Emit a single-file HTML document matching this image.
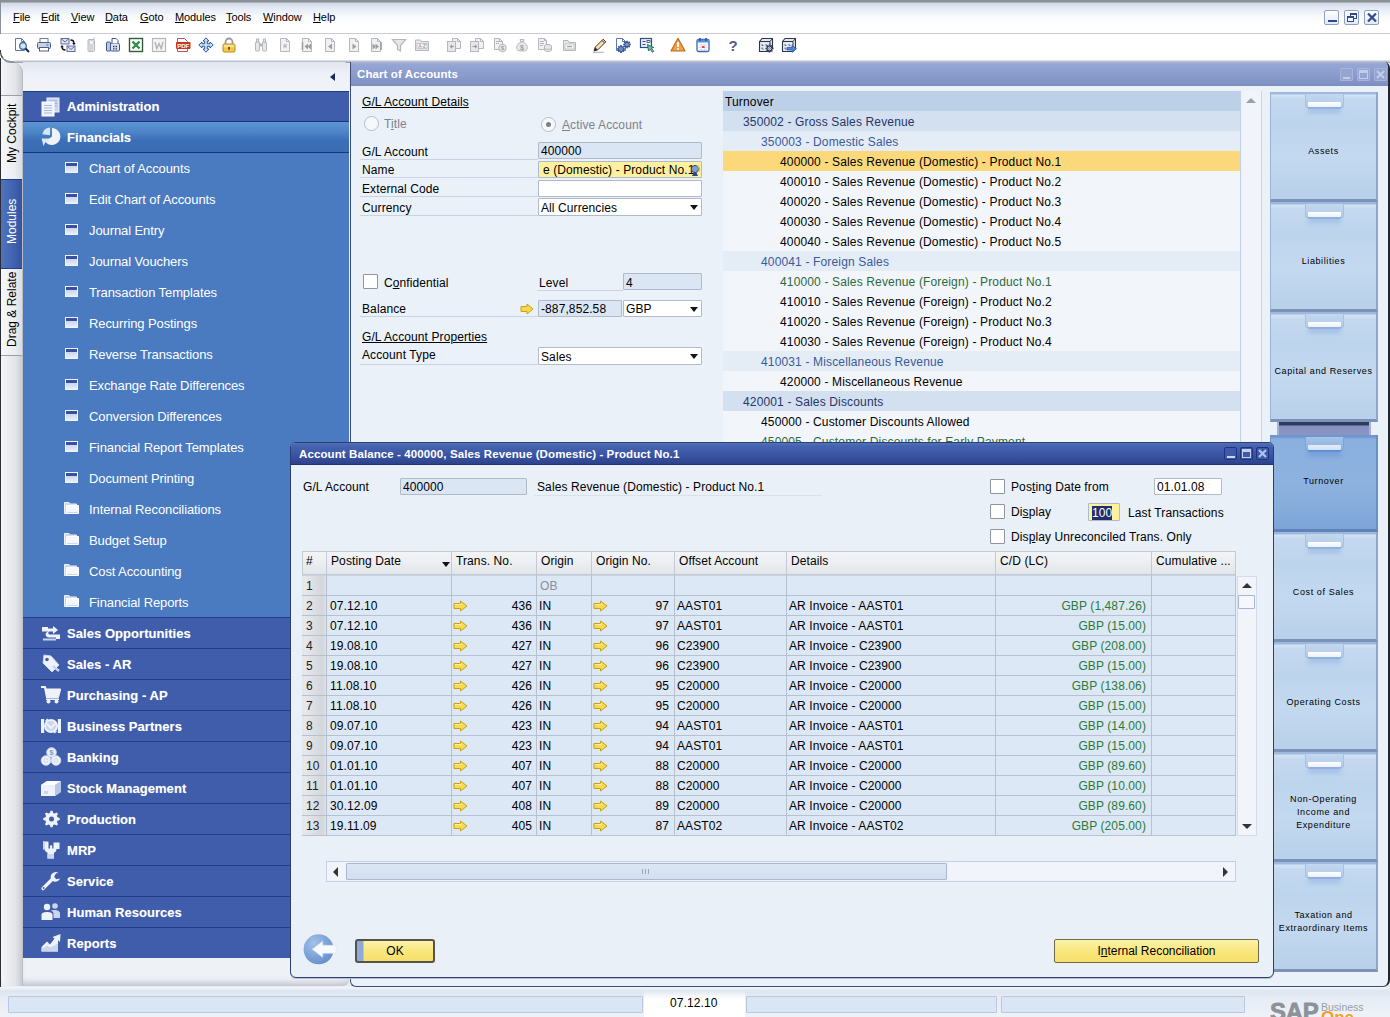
<!DOCTYPE html>
<html>
<head>
<meta charset="utf-8">
<title>SAP Business One</title>
<style>
*{box-sizing:border-box;margin:0;padding:0}
html,body{width:1390px;height:1017px;overflow:hidden;background:#e9eef5;font-family:"Liberation Sans",sans-serif;font-size:12px;color:#000}
.abs{position:absolute}
u{text-decoration:underline;text-underline-offset:1px}
/* ===== top chrome ===== */
#menubar{position:absolute;left:0;top:0;width:1390px;height:34px;background:linear-gradient(#8a9096 0,#8a9096 2px,#cfd8e6 3px,#e3eaf4 8px,#f7f9fc 16px,#ffffff 24px,#ffffff 100%);border-bottom:1px solid #c9cdd3}
#menubar span{position:absolute;top:11px;font-size:11px;color:#000;letter-spacing:-0.1px}
#toolbar{position:absolute;left:0;top:34px;width:1390px;height:28px;background:#fff}
.winbtn{position:absolute;top:10px;width:15px;height:15px;border:1px solid #8fa0c4;border-radius:2px;background:linear-gradient(#ffffff,#e4e9f3)}
/* ===== left ===== */
#tabstrip{position:absolute;left:1px;top:63px;width:22px;height:923px;border-radius:0 9px 0 8px;overflow:hidden;border-right:1px solid #b9bdc5;background:linear-gradient(90deg,#f4f5f7,#e2e4e8 70%,#c9ccd2)}
.vtab{position:absolute;left:0;width:23px;border-top:1px solid #9a9ea6;overflow:hidden}
.vtab span{position:absolute;left:4px;transform-origin:0 0;transform:rotate(-90deg);white-space:nowrap;font-size:12px}
#sidebar{position:absolute;left:23px;top:62px;width:326px;height:924px;background:#eef1f6;border-radius:0 6px 6px 0;overflow:hidden;box-shadow:inset 0 -7px 6px -4px rgba(60,70,90,.28)}
#sbhead{position:absolute;left:0;top:0;width:327px;height:29px;background:linear-gradient(#dfe5ef,#eef1f7 40%,#f1f3f8)}
.mod{position:absolute;left:0;width:327px;height:31px;background:#3f5daa;border-top:1px solid #1f3d8a;color:#fff;font-weight:bold;font-size:13px}
.mod b{position:absolute;left:44px;top:8px;font-weight:bold;letter-spacing:0.05px;text-shadow:0 0 1px rgba(255,255,255,.35)}
.mod svg{position:absolute}
#fin{height:32px;z-index:2;background:linear-gradient(#5e94d2 0,#4c84c8 35%,#3c6fb7 60%,#3a6cb3 100%);border-top:1px solid #17367f;border-bottom:1px solid #17367f}
#sub{position:absolute;left:0;top:90px;width:327px;height:465px;background:#4a7abf}
.si{position:absolute;left:0;width:327px;height:31px;color:#fff;font-size:13px}
.si span{position:absolute;left:66px;top:9px;letter-spacing:-0.1px}
.si i{position:absolute;left:42px;top:10px;width:13px;height:11px;border:1px solid #f0f3fa;background:linear-gradient(#3b4fa0 0,#3b4fa0 3px,#c9d4ee 3px,#e8edf8 100%)}
.si em{position:absolute;left:41px;top:8px;width:15px;height:13px}

/* ===== COA window ===== */
#coa{position:absolute;left:350px;top:62px;width:1040px;height:925px;background:#eaf1f9;border:1px solid #3d4c74;border-right:2px solid #23262e;border-top:none;border-radius:0 6px 7px 6px;overflow:hidden}
#coatitle{position:absolute;left:0;top:0;width:1038px;height:24px;background:linear-gradient(#aab7dc 0,#97a7d4 2px,#8d9ece 10px,#8294c6 20px,#7c8dbf 24px);color:#fff;font-weight:bold;font-size:11.5px}
#coatitle b{position:absolute;left:6px;top:6px;letter-spacing:0.1px}
.fb{position:absolute;top:6px;width:13px;height:13px;border:1px solid #a7b3d8;background:#95a5d2;border-radius:1px}
.lbl{position:absolute;font-size:12px;white-space:nowrap;letter-spacing:0.1px}
.ul{position:absolute;height:1px;background:#c9d3e1}
.fld{position:absolute;border:1px solid #b1bac9;background:#dbe6f4;font-size:12px;white-space:nowrap;overflow:hidden;padding:1px 0 0 2px;border-radius:1px;letter-spacing:0.1px}
.dd{position:absolute;border:1px solid #b1bac9;background:#fff;font-size:12px;white-space:nowrap;overflow:hidden;padding:1px 0 0 2px;border-radius:1px;letter-spacing:0.1px}
.dd:after{content:"";position:absolute;right:3px;top:6px;border-left:4.5px solid transparent;border-right:4.5px solid transparent;border-top:5px solid #111}
.cb{position:absolute;width:15px;height:15px;border:1px solid #8e959f;background:#fff;border-radius:1px}
.radio{position:absolute;width:15px;height:15px;border:1px solid #b9bec6;border-radius:50%;background:#f6f8fb}
#tree{position:absolute;left:372px;top:29px;width:518px;height:352px;overflow:hidden;background:#f2f6fb;border-right:1px solid #c3d2e6}
.tr{position:absolute;left:0;width:518px;height:20px;font-size:12px;white-space:nowrap;padding-top:4px;letter-spacing:0.15px}
.l0{background:#bcd0e8;padding-left:2px;color:#000}
.l1{background:#d3e0f0;padding-left:20px;color:#27356a}
.l2{background:#e4ecf6;padding-left:38px;color:#3b5a9a}
.l3{background:#f2f6fb;padding-left:57px;color:#000}
#tsb{position:absolute;left:891px;top:29px;width:20px;height:352px;background:#f1f5fb;border-right:1px solid #c9d6e8}
.drw{position:absolute;left:919px;width:108px;background:linear-gradient(#9db9dc 0,#9db9dc 2px,#d3e4f6 3px,#c4d9f0 7px,#bdd4ed 30%,#c3d9f0 60%,#b9d0ea 100%);border-left:1px solid #9ab3d6;border-right:2px solid #8ea7cc;border-bottom:3px solid #7b93b8;font-size:9px;text-align:center;letter-spacing:0.6px;color:#000}
.drw .h{position:absolute;left:34px;top:2px;width:39px;height:14px;background:linear-gradient(#c3d8f0,#b3cbe9);border:1px solid #a9c0e0;border-top:none;border-radius:0 0 3px 3px}
.drw .h:after{content:"";position:absolute;left:2px;top:8px;width:33px;height:5px;background:linear-gradient(#ffffff,#e9f1fb);border-radius:1px;box-shadow:0 2px 1px #8fb0dc,0 6px 5px #9dbde6}
.drw span{position:absolute;left:0;width:105px;line-height:13px}
.drw.sel{background:linear-gradient(#6f97cf 0,#6f97cf 2px,#8ab0df 4px,#8db2df 50%,#86acdb 80%,#7ba3d6 100%);border-left-color:#6d93c8;border-right-color:#6a8fc6;border-bottom-color:#5f83ba}
.drw.sel .h{background:linear-gradient(#a3c2e8,#8fb3e0);border-color:#7fa5d8}
.drw.sel .h:after{background:linear-gradient(#e4eefb,#cfe0f5);box-shadow:0 2px 1px #5f8fd0,0 6px 5px #6f9bd8}
/* ===== dialog ===== */
#dlg{position:absolute;left:290px;top:442px;width:984px;height:536px;background:#e9f0f8;border:1px solid #2c3f72;border-radius:5px 5px 6px 6px;overflow:hidden;box-shadow:0 1px 0 #b8c0d0}
#dlgt{position:absolute;left:0;top:0;width:984px;height:22px;background:linear-gradient(#5171ba 0,#4563b0 3px,#3b55a4 12px,#2b4088 22px);color:#fff;font-weight:bold;font-size:11.5px;border-bottom:1px solid #1f3470}
#dlgt b{position:absolute;left:8px;top:5px;letter-spacing:0.1px}
.db{position:absolute;top:4px;width:13px;height:13px;border:1px solid #1e3580;background:#3e5aaa;border-radius:2px}
#grid{position:absolute;left:11px;top:108px;width:934px;height:285px}
.gh{position:absolute;top:0;height:24px;background:linear-gradient(#f3f4f6,#eceef1 50%,#e2e5e9);border:1px solid #c3cad6;border-left:none;font-size:12px;padding:2px 0 0 4px;white-space:nowrap;overflow:hidden;letter-spacing:0.1px}
.gr{position:absolute;left:0;width:934px;height:20px;background:#dce8f5;border-bottom:1px solid #b7c1cf;font-size:12px;letter-spacing:0.1px}
.gr span{position:absolute;top:3px;white-space:nowrap}
.gr .n{left:0;top:0;width:24px;height:19px;background:linear-gradient(90deg,#dfe6ef 0,#e6e8eb 3px,#d3d6db 20px,#dde2e9 24px);padding:3px 0 0 4px;color:#222}
.vl{position:absolute;top:24px;width:1px;height:261px;background:#b7c1cf}
.ar{position:absolute;top:4px}
.btn{position:absolute;border:1px solid #6f6a4a;border-radius:2px;background:linear-gradient(#fdf3a8,#f9e67e 50%,#f6df6a);font-size:12px;text-align:center}
/* ===== status ===== */
#status{position:absolute;left:0;top:987px;width:1390px;height:30px;background:linear-gradient(#f4f6fa 0,#dde5f0 4px,#e6ecf5 10px,#eef2f8 100%)}
.sf{position:absolute;top:9px;height:17px;background:#dbe6f4;border:1px solid #b9c8de;border-radius:1px}
</style>
</head>
<body>
<!-- MENUBAR -->
<div id="menubar">
<span style="left:13px"><u>F</u>ile</span>
<span style="left:41px"><u>E</u>dit</span>
<span style="left:71px"><u>V</u>iew</span>
<span style="left:105px"><u>D</u>ata</span>
<span style="left:140px"><u>G</u>oto</span>
<span style="left:175px"><u>M</u>odules</span>
<span style="left:226px"><u>T</u>ools</span>
<span style="left:263px"><u>W</u>indow</span>
<span style="left:313px"><u>H</u>elp</span>
<div class="winbtn" style="left:1324px"><div class="abs" style="left:3px;top:9px;width:9px;height:2px;background:#2d4a8f"></div></div>
<div class="winbtn" style="left:1344px"><div class="abs" style="left:5px;top:2px;width:7px;height:6px;border:1px solid #2d4a8f;border-top-width:2px"></div><div class="abs" style="left:2px;top:5px;width:7px;height:6px;border:1px solid #2d4a8f;border-top-width:2px;background:#f3f5fa"></div></div>
<div class="winbtn" style="left:1364px"><svg class="abs" style="left:2px;top:2px" width="10" height="9" viewBox="0 0 10 9"><path d="M1 0.5 L9 8.5 M9 0.5 L1 8.5" stroke="#2d4a8f" stroke-width="2.2"/></svg></div>
</div>
<div class="abs" style="left:0;top:2px;width:1px;height:44px;background:#8a9098"></div>
<!-- TOOLBAR -->
<div id="toolbar"><svg class="abs" style="left:14px;top:3px" width="16" height="16" viewBox="0 0 16 16"><path d="M1.5 1.5H7.5L10.5 4.5V13.5H1.5Z" fill="#fff" stroke="#5b78b0" stroke-width="1"/><path d="M7.5 1.5V4.5H10.5" fill="none" stroke="#5b78b0" stroke-width="1"/><circle cx="9" cy="9" r="3.3" fill="#cfe3f6" stroke="#3d5f9a" stroke-width="1.2"/><path d="M11.5 11.5L15 15" stroke="#1c2740" stroke-width="2"/></svg><svg class="abs" style="left:36px;top:3px" width="16" height="16" viewBox="0 0 16 16"><rect x="4" y="1.5" width="8" height="5" fill="#fff" stroke="#6b7fa8"/><rect x="1.5" y="5.5" width="13" height="6" rx="1" fill="#c9d3e6" stroke="#4d5f86"/><rect x="3.5" y="10.5" width="9" height="3.5" fill="#fff" stroke="#4d5f86"/><rect x="10.5" y="7.5" width="2" height="1" fill="#4d5f86"/></svg><svg class="abs" style="left:60px;top:3px" width="16" height="16" viewBox="0 0 16 16"><rect x="1" y="1.5" width="8" height="5.5" fill="#e2e4f5" stroke="#5f6fa3"/><path d="M1 1.5L5 5L9 1.5" fill="none" stroke="#5f6fa3"/><rect x="7" y="9" width="8" height="5.5" fill="#e2e4f5" stroke="#5f6fa3"/><path d="M7 9L11 12.5L15 9" fill="none" stroke="#5f6fa3"/><path d="M10.5 3C13 3 14 4.5 14 6.5" fill="none" stroke="#111" stroke-width="1.4"/><path d="M12.2 6L14 8.3L15.6 6Z" fill="#111"/><path d="M5.5 13C3 13 2 11.5 2 9.8" fill="none" stroke="#111" stroke-width="1.4"/><path d="M0.4 10.2L2 8L3.8 10.2Z" fill="#111"/></svg><svg class="abs" style="left:83px;top:3px" width="16" height="16" viewBox="0 0 16 16"><rect x="5" y="2.5" width="6.5" height="12" rx="1" fill="#e6e7e9" stroke="#b4b7bb"/><rect x="6.2" y="4" width="4" height="3" fill="#fff" stroke="#b4b7bb" stroke-width=".6"/><path d="M6.5 9h1M8.5 9h1M6.5 11h1M8.5 11h1M6.5 13h1M8.5 13h1" stroke="#9a9da2"/><path d="M11 2.5V0.5" stroke="#b4b7bb"/></svg><svg class="abs" style="left:105px;top:3px" width="16" height="16" viewBox="0 0 16 16"><rect x="1.5" y="5" width="4" height="9" rx="1" fill="#b9c6e0" stroke="#3f558a"/><rect x="5.5" y="6.5" width="9" height="7.5" rx="1" fill="#dfe6f3" stroke="#3f558a"/><path d="M7 6.5V1.5H11L13 3.5V6.5" fill="#fff" stroke="#3f558a"/><path d="M8 9.5h1.5M10.5 9.5h1.5M8 11.8h1.5M10.5 11.8h1.5" stroke="#2c3f70" stroke-width="1.3"/></svg><svg class="abs" style="left:128px;top:3px" width="16" height="16" viewBox="0 0 16 16"><rect x="1.5" y="1.5" width="13" height="13" fill="#fff" stroke="#2f5d3a" stroke-width="1.4"/><path d="M4.5 4.5L11.5 11.5M11.5 4.5L4.5 11.5" stroke="#2e8a45" stroke-width="2.4"/></svg><svg class="abs" style="left:151px;top:3px" width="16" height="16" viewBox="0 0 16 16"><rect x="1.5" y="1.5" width="13" height="13" fill="#f4f4f5" stroke="#b4b7bb" stroke-width="1.2"/><path d="M4 5L5.8 11.5L8 6.5L10.2 11.5L12 5" fill="none" stroke="#b4b7bb" stroke-width="1.5"/></svg><svg class="abs" style="left:175px;top:3px" width="16" height="16" viewBox="0 0 16 16"><path d="M2.5 1.5H9.5L12.5 4.5V14.5H2.5Z" fill="#fff" stroke="#b55"/><rect x="1" y="5" width="14.5" height="7" rx="1" fill="#c8342c"/><text x="8.2" y="10.8" font-family="Liberation Sans" font-weight="bold" font-size="6.2" fill="#fff" text-anchor="middle" letter-spacing="-0.2">PDF</text></svg><svg class="abs" style="left:198px;top:3px" width="16" height="16" viewBox="0 0 16 16"><path d="M8 0.8L11 4H9.3V6.7H12V5L15.2 8L12 11V9.3H9.3V12H11L8 15.2L5 12H6.7V9.3H4V11L0.8 8L4 5V6.7H6.7V4H5Z" fill="#cfe1f5" stroke="#2a5a9a" stroke-width="1" stroke-linejoin="round"/></svg><svg class="abs" style="left:221px;top:3px" width="16" height="16" viewBox="0 0 16 16"><path d="M4.5 7.5V5A3.5 3.5 0 0 1 11.5 5V7.5" fill="none" stroke="#9a9aa0" stroke-width="1.8"/><rect x="2" y="7" width="12" height="8" rx="1.2" fill="#f3c94a" stroke="#b98a16"/><rect x="2.8" y="7.8" width="10.4" height="2.5" fill="#fbe38c"/><path d="M8 10v3M7 11h2" stroke="#3a3320" stroke-width="1.1"/></svg><svg class="abs" style="left:253px;top:3px" width="16" height="16" viewBox="0 0 16 16"><rect x="2.5" y="5" width="4" height="9" rx="1" fill="#e6e7e9" stroke="#b4b7bb"/><rect x="9.5" y="5" width="4" height="9" rx="1" fill="#e6e7e9" stroke="#b4b7bb"/><rect x="3.5" y="2" width="2.2" height="3" fill="#e6e7e9" stroke="#b4b7bb"/><rect x="10.3" y="2" width="2.2" height="3" fill="#e6e7e9" stroke="#b4b7bb"/><rect x="6.5" y="6.5" width="3" height="3" fill="#b4b7bb"/></svg><svg class="abs" style="left:277px;top:3px" width="16" height="16" viewBox="0 0 16 16"><path d="M3.5 1.5H9.5L12.5 4.5V14.5H3.5Z" fill="#f1f1f2" stroke="#b4b7bb" stroke-width="1"/><path d="M9.5 1.5V4.5H12.5" fill="none" stroke="#b4b7bb" stroke-width="1"/><path d="M6 9h4M8 7v4M6.5 7.5l3 3M9.5 7.5l-3 3" stroke="#b4b7bb" stroke-width=".9"/></svg><svg class="abs" style="left:299px;top:3px" width="16" height="16" viewBox="0 0 16 16"><path d="M3.5 1.5H9.5L12.5 4.5V14.5H3.5Z" fill="#f1f1f2" stroke="#b4b7bb" stroke-width="1"/><path d="M9.5 1.5V4.5H12.5" fill="none" stroke="#b4b7bb" stroke-width="1"/><path d="M3.5 5V13" stroke="#9a9da2" stroke-width="1.6"/><path d="M9 6.5L5.5 9.5L9 12.5Z" fill="#9a9da2"/><path d="M12 6.5L8.5 9.5L12 12.5Z" fill="#9a9da2"/></svg><svg class="abs" style="left:322px;top:3px" width="16" height="16" viewBox="0 0 16 16"><path d="M3.5 1.5H9.5L12.5 4.5V14.5H3.5Z" fill="#f1f1f2" stroke="#b4b7bb" stroke-width="1"/><path d="M9.5 1.5V4.5H12.5" fill="none" stroke="#b4b7bb" stroke-width="1"/><path d="M10 6.5L6 9.5L10 12.5Z" fill="#9a9da2"/></svg><svg class="abs" style="left:346px;top:3px" width="16" height="16" viewBox="0 0 16 16"><path d="M3.5 1.5H9.5L12.5 4.5V14.5H3.5Z" fill="#f1f1f2" stroke="#b4b7bb" stroke-width="1"/><path d="M9.5 1.5V4.5H12.5" fill="none" stroke="#b4b7bb" stroke-width="1"/><path d="M6.5 6.5L10.5 9.5L6.5 12.5Z" fill="#9a9da2"/></svg><svg class="abs" style="left:368px;top:3px" width="16" height="16" viewBox="0 0 16 16"><path d="M3.5 1.5H9.5L12.5 4.5V14.5H3.5Z" fill="#f1f1f2" stroke="#b4b7bb" stroke-width="1"/><path d="M9.5 1.5V4.5H12.5" fill="none" stroke="#b4b7bb" stroke-width="1"/><path d="M13 5V13" stroke="#9a9da2" stroke-width="1.6"/><path d="M4.5 6.5L8 9.5L4.5 12.5Z" fill="#9a9da2"/><path d="M7.5 6.5L11 9.5L7.5 12.5Z" fill="#9a9da2"/></svg><svg class="abs" style="left:391px;top:3px" width="16" height="16" viewBox="0 0 16 16"><path d="M1.5 2.5H14.5L9.5 8.5V14L6.5 12.5V8.5Z" fill="#e6e7e9" stroke="#b4b7bb" stroke-width="1.2"/></svg><svg class="abs" style="left:414px;top:3px" width="16" height="16" viewBox="0 0 16 16"><path d="M1.5 4.5V3H6.5L7.5 4.5H14.5V13.5H1.5Z" fill="#e6e7e9" stroke="#b4b7bb"/><rect x="3" y="6.5" width="10" height="5" fill="#f6f6f7" stroke="#b4b7bb" stroke-width=".7"/><text x="8" y="10.6" font-family="Liberation Sans" font-weight="bold" font-size="4.5" fill="#9a9da2" text-anchor="middle">A-Z</text></svg><svg class="abs" style="left:446px;top:3px" width="16" height="16" viewBox="0 0 16 16"><path d="M6.5 1.5H11.5L14.5 4.5V11.5H6.5Z" fill="#f1f1f2" stroke="#b4b7bb" stroke-width="1"/><path d="M11.5 1.5V4.5H14.5" fill="none" stroke="#b4b7bb" stroke-width="1"/><rect x="1.5" y="4.5" width="8" height="10" fill="#e6e7e9" stroke="#b4b7bb"/><path d="M8 9.5H4.5M6 8L4.5 9.5L6 11" fill="none" stroke="#9a9da2" stroke-width="1.1"/></svg><svg class="abs" style="left:469px;top:3px" width="16" height="16" viewBox="0 0 16 16"><path d="M6.5 1.5H11.5L14.5 4.5V11.5H6.5Z" fill="#f1f1f2" stroke="#b4b7bb" stroke-width="1"/><path d="M11.5 1.5V4.5H14.5" fill="none" stroke="#b4b7bb" stroke-width="1"/><rect x="1.5" y="4.5" width="8" height="10" fill="#e6e7e9" stroke="#b4b7bb"/><path d="M3.5 9.5H7.5M6 8L7.5 9.5L6 11" fill="none" stroke="#9a9da2" stroke-width="1.1"/></svg><svg class="abs" style="left:492px;top:3px" width="16" height="16" viewBox="0 0 16 16"><path d="M2.5 1.5H7.5L10.5 4.5V12.5H2.5Z" fill="#f1f1f2" stroke="#b4b7bb" stroke-width="1"/><path d="M7.5 1.5V4.5H10.5" fill="none" stroke="#b4b7bb" stroke-width="1"/><path d="M4 4.5h4M4 6.5h3" stroke="#b4b7bb"/><circle cx="10.5" cy="11" r="3.8" fill="#e6e7e9" stroke="#b4b7bb"/><text x="10.5" y="13.2" font-family="Liberation Sans" font-weight="bold" font-size="6" fill="#9a9da2" text-anchor="middle">$</text></svg><svg class="abs" style="left:514px;top:3px" width="16" height="16" viewBox="0 0 16 16"><path d="M6 2.5H10L9.3 5H6.7Z" fill="#e6e7e9" stroke="#b4b7bb"/><path d="M6.7 5C3 7 2 10 3 12.5C4 14.5 12 14.5 13 12.5C14 10 13 7 9.3 5Z" fill="#e6e7e9" stroke="#b4b7bb"/><text x="8" y="12.6" font-family="Liberation Sans" font-weight="bold" font-size="7" fill="#9a9da2" text-anchor="middle">$</text></svg><svg class="abs" style="left:537px;top:3px" width="16" height="16" viewBox="0 0 16 16"><path d="M1.5 1.5H7.5L9.5 3.5V12.5H1.5Z" fill="#f1f1f2" stroke="#b4b7bb" stroke-width="1"/><path d="M7.5 1.5V3.5H9.5" fill="none" stroke="#b4b7bb" stroke-width="1"/><path d="M3 4.5h4M3 6.5h4M3 8.5h3" stroke="#b4b7bb"/><ellipse cx="11" cy="9" rx="3.5" ry="1.5" fill="#e6e7e9" stroke="#b4b7bb"/><path d="M7.5 9V13C7.5 15 14.5 15 14.5 13V9" fill="#e6e7e9" stroke="#b4b7bb"/><path d="M7.5 11C7.5 12.8 14.5 12.8 14.5 11" fill="none" stroke="#b4b7bb"/></svg><svg class="abs" style="left:561px;top:3px" width="16" height="16" viewBox="0 0 16 16"><path d="M2.5 5.5V3.5H7L8 5.5H14.5V13.5H2.5Z" fill="#e6e7e9" stroke="#b4b7bb"/><rect x="4" y="7" width="9" height="5" fill="#f6f6f7" stroke="#b4b7bb" stroke-width=".7"/><path d="M6 9.5h5" stroke="#9a9da2" stroke-width="1.2"/></svg><svg class="abs" style="left:592px;top:3px" width="16" height="16" viewBox="0 0 16 16"><path d="M2 14L3.2 10.2L11.2 2.2L13.8 4.8L5.8 12.8Z" fill="#f6e3b4" stroke="#3a3226" stroke-width="1"/><path d="M2 14L3.2 10.2L5.8 12.8Z" fill="#3a3226"/><path d="M10 3.4L12.6 6" stroke="#b9562b" stroke-width="1.3"/><path d="M1 15.3H12" stroke="#9a9aa0" stroke-width=".8"/></svg><svg class="abs" style="left:615px;top:3px" width="16" height="16" viewBox="0 0 16 16"><path d="M1.5 1.5H7.5L10.5 4.5V13.5H1.5Z" fill="#fff" stroke="#5b78b0" stroke-width="1"/><path d="M7.5 1.5V4.5H10.5" fill="none" stroke="#5b78b0" stroke-width="1"/><path d="M7.80 12.00L9.90 12.00" stroke="#2d4f95" stroke-width="1.6"/><path d="M7.27 13.27L8.76 14.76" stroke="#2d4f95" stroke-width="1.6"/><path d="M6.00 13.80L6.00 15.90" stroke="#2d4f95" stroke-width="1.6"/><path d="M4.73 13.27L3.24 14.76" stroke="#2d4f95" stroke-width="1.6"/><path d="M4.20 12.00L2.10 12.00" stroke="#2d4f95" stroke-width="1.6"/><path d="M4.73 10.73L3.24 9.24" stroke="#2d4f95" stroke-width="1.6"/><path d="M6.00 10.20L6.00 8.10" stroke="#2d4f95" stroke-width="1.6"/><path d="M7.27 10.73L8.76 9.24" stroke="#2d4f95" stroke-width="1.6"/><circle cx="6" cy="12" r="2.3" fill="#8fb0e0" stroke="#2d4f95" stroke-width="1"/><circle cx="6" cy="12" r="0.87" fill="#fff" stroke="#2d4f95" stroke-width=".6"/><path d="M13.70 7.50L15.80 7.50" stroke="#2d4f95" stroke-width="1.6"/><path d="M13.20 8.70L14.69 10.19" stroke="#2d4f95" stroke-width="1.6"/><path d="M12.00 9.20L12.00 11.30" stroke="#2d4f95" stroke-width="1.6"/><path d="M10.80 8.70L9.31 10.19" stroke="#2d4f95" stroke-width="1.6"/><path d="M10.30 7.50L8.20 7.50" stroke="#2d4f95" stroke-width="1.6"/><path d="M10.80 6.30L9.31 4.81" stroke="#2d4f95" stroke-width="1.6"/><path d="M12.00 5.80L12.00 3.70" stroke="#2d4f95" stroke-width="1.6"/><path d="M13.20 6.30L14.69 4.81" stroke="#2d4f95" stroke-width="1.6"/><circle cx="12" cy="7.5" r="2.2" fill="#8fb0e0" stroke="#2d4f95" stroke-width="1"/><circle cx="12" cy="7.5" r="0.84" fill="#fff" stroke="#2d4f95" stroke-width=".6"/></svg><svg class="abs" style="left:639px;top:3px" width="16" height="16" viewBox="0 0 16 16"><rect x="1.5" y="1.5" width="11" height="9" fill="#eef3fb" stroke="#2d4f85" stroke-width="1.2"/><path d="M3.5 4.5h3M3.5 7.5h3" stroke="#2d4f85" stroke-width="1.2"/><rect x="8" y="3.5" width="3" height="2" fill="#fff" stroke="#2d4f85" stroke-width=".8"/><path d="M8.5 7.5L14.8 10.5L12.3 11.3L14.8 14.3L13.5 15.3L11.2 12.3L9.5 14Z" fill="#6fbf9a" stroke="#246a5a" stroke-width=".9" stroke-linejoin="round"/></svg><svg class="abs" style="left:670px;top:3px" width="16" height="16" viewBox="0 0 16 16"><path d="M8 1.3L15 14H1Z" fill="#f0a04a" stroke="#c26a17" stroke-width="1.2" stroke-linejoin="round"/><path d="M8 5V10" stroke="#fff" stroke-width="2"/><circle cx="8" cy="12" r="1.1" fill="#fff"/></svg><svg class="abs" style="left:695px;top:3px" width="16" height="16" viewBox="0 0 16 16"><rect x="2" y="2.5" width="12" height="12" rx="1.5" fill="#fff" stroke="#3566b0" stroke-width="1.3"/><rect x="2" y="2.5" width="12" height="3" fill="#5a8fd8"/><path d="M5 1V4M11 1V4" stroke="#2a4f95" stroke-width="1.5"/><path d="M3.5 8h9M3.5 10.5h9M3.5 13h9M6 6.5v7.5M10 6.5v7.5" stroke="#c5d3ea" stroke-width=".7"/><rect x="7" y="9" width="2.5" height="2" fill="#e04848"/></svg><svg class="abs" style="left:725px;top:3px" width="16" height="16" viewBox="0 0 16 16"><text x="8" y="13.5" font-family="Liberation Sans" font-weight="bold" font-size="15" fill="#5b5a86" text-anchor="middle">?</text></svg><svg class="abs" style="left:758px;top:3px" width="16" height="16" viewBox="0 0 16 16"><path d="M1.5 4.5L4 1.5H14.5V11L12 14.5H1.5Z" fill="#e4e8ef" stroke="#2c3550" stroke-width="1.1" stroke-linejoin="round"/><path d="M1.5 4.5H12V14.5M12 4.5L14.5 1.5" fill="none" stroke="#2c3550" stroke-width="1"/><path d="M4 7v1.5h1.5M8 7v1.5h1.5M4 10.5v1.5h1.5" fill="none" stroke="#55658a" stroke-width=".9"/><path d="M13.40 11.50L15.50 11.50" stroke="#2c3550" stroke-width="1.6"/><path d="M12.84 12.84L14.33 14.33" stroke="#2c3550" stroke-width="1.6"/><path d="M11.50 13.40L11.50 15.50" stroke="#2c3550" stroke-width="1.6"/><path d="M10.16 12.84L8.67 14.33" stroke="#2c3550" stroke-width="1.6"/><path d="M9.60 11.50L7.50 11.50" stroke="#2c3550" stroke-width="1.6"/><path d="M10.16 10.16L8.67 8.67" stroke="#2c3550" stroke-width="1.6"/><path d="M11.50 9.60L11.50 7.50" stroke="#2c3550" stroke-width="1.6"/><path d="M12.84 10.16L14.33 8.67" stroke="#2c3550" stroke-width="1.6"/><circle cx="11.5" cy="11.5" r="2.4" fill="#d9dde6" stroke="#2c3550" stroke-width="1"/><circle cx="11.5" cy="11.5" r="0.91" fill="#fff" stroke="#2c3550" stroke-width=".6"/></svg><svg class="abs" style="left:781px;top:3px" width="16" height="16" viewBox="0 0 16 16"><path d="M1.5 4.5L4 1.5H14.5V11L12 14.5H1.5Z" fill="#e4e8ef" stroke="#2c3550" stroke-width="1.1" stroke-linejoin="round"/><path d="M1.5 4.5H12V14.5M12 4.5L14.5 1.5" fill="none" stroke="#2c3550" stroke-width="1"/><path d="M4 7v1.5h1.5M8 7v1.5h1.5M4 10.5v1.5h1.5" fill="none" stroke="#55658a" stroke-width=".9"/><path d="M6 10.5H11V8.3L15.5 11.8L11 15.3V13H6Z" fill="#4f86d4" stroke="#2a5aa8" stroke-width=".8" stroke-linejoin="round"/></svg></div><!--/TB-->
<!-- LEFT -->
<div class="abs" style="left:12px;top:60px;width:1378px;height:3px;background:linear-gradient(#eceef1,#b4b9c2 60%,#8d93a0)"></div>
<div class="abs" style="left:0;top:50px;width:14px;height:13px;background:#fff;border-left:1px solid #3a3e48;border-bottom:2px solid #8d93a0;border-radius:0 0 0 11px"></div>
<div class="abs" style="left:0;top:58px;width:1px;height:930px;background:#2a2d35"></div>
<div id="tabstrip">
 <div class="vtab" style="top:32px;height:84px;background:linear-gradient(90deg,#f6f7f9,#ebedf0 60%,#d5d8dd)"><span style="top:67px">My Cockpit</span></div>
 <div class="vtab" style="top:116px;height:90px;background:linear-gradient(90deg,#4f74bd,#3f60ae 60%,#314e9c);border-top:1px solid #24408a;border-bottom:1px solid #24408a"><span style="top:64px;color:#fff">Modules</span></div>
 <div class="vtab" style="top:206px;height:87px;background:linear-gradient(90deg,#f6f7f9,#ebedf0 60%,#d5d8dd);border-bottom:1px solid #9a9ea6;border-top:none"><span style="top:78px">Drag &amp; Relate</span></div>
</div>
<div id="sidebar">
 <div id="sbhead"><div class="abs" style="left:307px;top:11px;width:0;height:0;border-top:4px solid transparent;border-bottom:4px solid transparent;border-right:5px solid #1a2a5a"></div></div>
 <div class="mod" style="top:29px"><!--ic-admin--><svg style="left:16px;top:4px" width="24" height="22" viewBox="0 0 24 22"><rect x="8" y="2" width="12" height="14" fill="#c9d6ee" stroke="#eef2fa" stroke-width="1"/><path d="M10 5h8M10 7.5h8M10 10h8" stroke="#9fb2de" stroke-width="1"/><rect x="3" y="6" width="12" height="14" fill="#eef2fa" stroke="#fff" stroke-width="1"/><path d="M5 9.5h8M5 12h8M5 14.5h8M5 17h8" stroke="#a9bbe2" stroke-width="1"/></svg><!--/ic-admin--><b style="top:7px">Administration</b></div>
 <div class="mod" id="fin" style="top:59px"><!--ic-fin--><svg style="left:16px;top:4px" width="24" height="22" viewBox="0 0 24 22"><path d="M13 2A8.5 8.5 0 1 1 6 15.5L13 10.5Z" fill="#eef2fa"/><path d="M11 1.6A8.5 8.5 0 0 0 3.3 8.3L11 9.2Z" fill="#d7e6f7"/><path d="M2.5 12.5H10L8.5 17.5L6.5 16L4.5 20L3.5 16Z" fill="#dbe8f8"/></svg><!--/ic-fin--><b>Financials</b></div>
 <div id="sub">
  <div class="si" style="top:0"><i></i><span>Chart of Accounts</span></div>
  <div class="si" style="top:31px"><i></i><span>Edit Chart of Accounts</span></div>
  <div class="si" style="top:62px"><i></i><span>Journal Entry</span></div>
  <div class="si" style="top:93px"><i></i><span>Journal Vouchers</span></div>
  <div class="si" style="top:124px"><i></i><span>Transaction Templates</span></div>
  <div class="si" style="top:155px"><i></i><span>Recurring Postings</span></div>
  <div class="si" style="top:186px"><i></i><span>Reverse Transactions</span></div>
  <div class="si" style="top:217px"><i></i><span>Exchange Rate Differences</span></div>
  <div class="si" style="top:248px"><i></i><span>Conversion Differences</span></div>
  <div class="si" style="top:279px"><i></i><span>Financial Report Templates</span></div>
  <div class="si" style="top:310px"><i></i><span>Document Printing</span></div>
  <div class="si" style="top:341px"><!--fold--><em><svg width="17" height="15" viewBox="0 0 17 15" style="position:absolute;left:-1px;top:-1px"><path d="M1.5 13.5V2.5H6L7.5 4H13.5V13.5Z" fill="#c7d6ee" stroke="#eef2fa" stroke-width="1"/><path d="M3.5 13.5V5.5H15.5V13.5Z" fill="#f4f7fc" stroke="#ffffff" stroke-width="1"/><path d="M4 12.5h11" stroke="#cdd9ee"/></svg></em><!--/fold--><span>Internal Reconciliations</span></div>
  <div class="si" style="top:372px"><!--fold--><em><svg width="17" height="15" viewBox="0 0 17 15" style="position:absolute;left:-1px;top:-1px"><path d="M1.5 13.5V2.5H6L7.5 4H13.5V13.5Z" fill="#c7d6ee" stroke="#eef2fa" stroke-width="1"/><path d="M3.5 13.5V5.5H15.5V13.5Z" fill="#f4f7fc" stroke="#ffffff" stroke-width="1"/><path d="M4 12.5h11" stroke="#cdd9ee"/></svg></em><!--/fold--><span>Budget Setup</span></div>
  <div class="si" style="top:403px"><!--fold--><em><svg width="17" height="15" viewBox="0 0 17 15" style="position:absolute;left:-1px;top:-1px"><path d="M1.5 13.5V2.5H6L7.5 4H13.5V13.5Z" fill="#c7d6ee" stroke="#eef2fa" stroke-width="1"/><path d="M3.5 13.5V5.5H15.5V13.5Z" fill="#f4f7fc" stroke="#ffffff" stroke-width="1"/><path d="M4 12.5h11" stroke="#cdd9ee"/></svg></em><!--/fold--><span>Cost Accounting</span></div>
  <div class="si" style="top:434px"><!--fold--><em><svg width="17" height="15" viewBox="0 0 17 15" style="position:absolute;left:-1px;top:-1px"><path d="M1.5 13.5V2.5H6L7.5 4H13.5V13.5Z" fill="#c7d6ee" stroke="#eef2fa" stroke-width="1"/><path d="M3.5 13.5V5.5H15.5V13.5Z" fill="#f4f7fc" stroke="#ffffff" stroke-width="1"/><path d="M4 12.5h11" stroke="#cdd9ee"/></svg></em><!--/fold--><span>Financial Reports</span></div>
 </div>
 <div class="mod" style="top:555px"><!--ic0--><svg style="left:16px;top:4px" width="24" height="22" viewBox="0 0 24 22"><path d="M3 6.5H14V4L19 8L14 12V9.5H10.5C9 9.5 9 12.5 10.5 12.5H21V15.5H10C5.5 15.5 5.5 9.5 10 9.5H3Z" fill="#eef2fa"/><path d="M3 6.5H9M17 15.5H21" stroke="#eef2fa" stroke-width="3"/><path d="M4 17.5H17" stroke="#c9d6ee" stroke-width="2"/></svg><!--/ic0--><b>Sales Opportunities</b></div>
 <div class="mod" style="top:586px"><!--ic1--><svg style="left:16px;top:4px" width="24" height="22" viewBox="0 0 24 22"><path d="M5 2L12 3L20 12L13 19L4 10Z" fill="#eef2fa" stroke="#c9d6ee" stroke-width="1" stroke-linejoin="round"/><circle cx="8" cy="6.5" r="1.8" fill="#3f5daa"/><path d="M14 13L20 18" stroke="#c9d6ee" stroke-width="2.5"/></svg><!--/ic1--><b>Sales - AR</b></div>
 <div class="mod" style="top:617px"><!--ic2--><svg style="left:16px;top:4px" width="24" height="22" viewBox="0 0 24 22"><path d="M2 3H6L8 13H19L21 5.5H7" fill="none" stroke="#eef2fa" stroke-width="2.2" stroke-linejoin="round"/><path d="M7 6H20.5L18.6 12.5H8.3Z" fill="#eef2fa"/><circle cx="9.5" cy="17.5" r="2" fill="#eef2fa"/><circle cx="17.5" cy="17.5" r="2" fill="#eef2fa"/><path d="M7 15.2H20" stroke="#eef2fa" stroke-width="1.6"/></svg><!--/ic2--><b>Purchasing - AP</b></div>
 <div class="mod" style="top:648px"><!--ic3--><svg style="left:16px;top:4px" width="24" height="22" viewBox="0 0 24 22"><rect x="2" y="4" width="3.2" height="14" fill="#eef2fa"/><rect x="18.8" y="4" width="3.2" height="14" fill="#eef2fa"/><circle cx="12" cy="11" r="6" fill="#c9d6ee" stroke="#eef2fa" stroke-width="2"/><path d="M8 9L12 13L16 8.5" fill="none" stroke="#eef2fa" stroke-width="2"/><path d="M6.5 6L9 4M17.5 16L15 18" stroke="#eef2fa" stroke-width="1.5"/></svg><!--/ic3--><b>Business Partners</b></div>
 <div class="mod" style="top:679px"><!--ic4--><svg style="left:16px;top:4px" width="24" height="22" viewBox="0 0 24 22"><circle cx="12.5" cy="6.5" r="4.8" fill="#eef2fa" stroke="#c9d6ee"/><text x="12.5" y="9.3" font-family="Liberation Sans" font-weight="bold" font-size="8" fill="#7f98cf" text-anchor="middle">$</text><circle cx="7" cy="14.5" r="4.8" fill="#eef2fa" stroke="#c9d6ee"/><circle cx="17" cy="14.5" r="4.8" fill="#eef2fa" stroke="#c9d6ee"/><circle cx="7" cy="14.5" r="2" fill="none" stroke="#c9d6ee"/><circle cx="17" cy="14.5" r="2" fill="none" stroke="#c9d6ee"/></svg><!--/ic4--><b>Banking</b></div>
 <div class="mod" style="top:710px"><!--ic5--><svg style="left:16px;top:4px" width="24" height="22" viewBox="0 0 24 22"><path d="M2 8L8 4H22V15L16 19H2Z" fill="#c9d6ee"/><path d="M2 8H16V19H2Z" fill="#eef2fa"/><path d="M2 8L8 4H22L16 8Z" fill="#fff"/><path d="M16 8L22 4V15L16 19Z" fill="#b5c6e6"/><path d="M5 14h4v3H5z" fill="#c9d6ee"/></svg><!--/ic5--><b>Stock Management</b></div>
 <div class="mod" style="top:741px"><!--ic6--><svg style="left:16px;top:4px" width="24" height="22" viewBox="0 0 24 22"><path d="M20.74 10.02L20.74 11.98L18.47 12.68L17.91 14.03L19.02 16.14L17.64 17.52L15.53 16.41L14.18 16.97L13.48 19.24L11.52 19.24L10.82 16.97L9.47 16.41L7.36 17.52L5.98 16.14L7.09 14.03L6.53 12.68L4.26 11.98L4.26 10.02L6.53 9.32L7.09 7.97L5.98 5.86L7.36 4.48L9.47 5.59L10.82 5.03L11.52 2.76L13.48 2.76L14.18 5.03L15.53 5.59L17.64 4.48L19.02 5.86L17.91 7.97L18.47 9.32Z" fill="#eef2fa"/><circle cx="12.5" cy="11" r="2.5" fill="#3f5daa"/></svg><!--/ic6--><b>Production</b></div>
 <div class="mod" style="top:772px"><!--ic7--><svg style="left:16px;top:4px" width="24" height="22" viewBox="0 0 24 22"><path d="M4 2.5H9.5V6H14.5V3.5H20.5V10H17.5C17.5 12.5 16 13.5 15 13.5V19.5H8.5V13.5C7 13.5 6 12.5 6 10.5H4Z" fill="#eef2fa"/><path d="M9.5 6H14.5V9.5H9.5Z" fill="#3f5daa"/><path d="M11 8.2a1.3 1.3 0 1 1 2.2 0V10.5H11Z" fill="#eef2fa"/><path d="M8.5 15H15V19.5H8.5Z" fill="#c9d6ee"/><path d="M4 2.5H6V10H4Z" fill="#c9d6ee"/></svg><!--/ic7--><b>MRP</b></div>
 <div class="mod" style="top:803px"><!--ic8--><svg style="left:16px;top:4px" width="24" height="22" viewBox="0 0 24 22"><path d="M4 18.5L13.5 9" stroke="#eef2fa" stroke-width="3.2" stroke-linecap="round"/><path d="M19.5 3.2A4.8 4.8 0 1 0 21 8.5L17.2 9.2L15.2 6.8L17 3.2Z" fill="#eef2fa"/><circle cx="4.6" cy="18" r="1" fill="#3f5daa"/></svg><!--/ic8--><b>Service</b></div>
 <div class="mod" style="top:834px"><!--ic9--><svg style="left:16px;top:4px" width="24" height="22" viewBox="0 0 24 22"><circle cx="8" cy="6" r="3.2" fill="#eef2fa"/><path d="M2.5 19V13.5C2.5 10 13.5 10 13.5 13.5V19Z" fill="#eef2fa"/><circle cx="16" cy="5" r="2.8" fill="#c9d6ee"/><path d="M12 9.5C14 8.5 20.5 8.5 21 12V17H14.5V12.5C14.5 11 13 10 12 9.5Z" fill="#c9d6ee"/></svg><!--/ic9--><b>Human Resources</b></div>
 <div class="mod" style="top:865px;height:31px"><!--ic10--><svg style="left:16px;top:4px" width="24" height="22" viewBox="0 0 24 22"><path d="M2.5 19.5V15L8 9.5L11 12.5L15.5 6.5L13.5 5L21.5 2L21 10L19 8.3V19.5Z" fill="#eef2fa"/><path d="M2.5 19.5V17L8 13.5L11 15.5L19 11.5V19.5Z" fill="#c9d6ee"/></svg><!--/ic10--><b>Reports</b></div>
</div>

<div id="coa">
 <div id="coatitle"><b>Chart of Accounts</b>
  <div class="fb" style="left:989px"><div class="abs" style="left:2px;top:8px;width:7px;height:2px;background:#c3cdea"></div></div>
  <div class="fb" style="left:1006px"><div class="abs" style="left:1px;top:1px;width:9px;height:9px;border:1px solid #c3cdea;border-top-width:3px"></div></div>
  <div class="fb" style="left:1023px"><svg class="abs" style="left:1px;top:1px" width="9" height="9"><path d="M1 1L8 8M8 1L1 8" stroke="#c3cdea" stroke-width="2"/></svg></div>
 </div>
 <div class="lbl" style="left:11px;top:33px"><u>G/L Account Details</u></div>
 <div class="radio" style="left:13px;top:54px"></div><div class="lbl" style="left:33px;top:55px;color:#7d838c">T<u>i</u>tle</div>
 <div class="radio" style="left:190px;top:55px"><div class="abs" style="left:4px;top:4px;width:5px;height:5px;border-radius:50%;background:#7b828c"></div></div><div class="lbl" style="left:211px;top:56px;color:#7d838c"><u>A</u>ctive Account</div>
 <div class="lbl" style="left:11px;top:83px">G/L Account</div><div class="ul" style="left:9px;top:97px;width:178px"></div>
 <div class="fld" style="left:187px;top:80px;width:164px;height:17px">400000</div>
 <div class="lbl" style="left:11px;top:101px">Name</div><div class="ul" style="left:9px;top:115px;width:178px"></div>
 <div class="fld" style="left:187px;top:99px;width:164px;height:17px;background:#fdf09e;padding-left:4px">e (Domestic) - Product No.1<svg class="abs" style="left:150px;top:1px" width="13" height="14" viewBox="0 0 13 14"><circle cx="6" cy="6" r="3.6" fill="#7f9fd0" stroke="#35507f" stroke-width="1"/><path d="M8.5 2.5a5 5 0 0 1 1.5 6" fill="none" stroke="#d9c56a" stroke-width="1.6"/><path d="M3 13L4.5 9.5H7.5L9 13Z" fill="#2f4a7c"/></svg></div>
 <div class="lbl" style="left:11px;top:120px">External Code</div><div class="ul" style="left:9px;top:134px;width:178px"></div>
 <div class="fld" style="left:187px;top:118px;width:164px;height:17px;background:#fff"></div>
 <div class="lbl" style="left:11px;top:139px">Currency</div><div class="ul" style="left:9px;top:153px;width:178px"></div>
 <div class="dd" style="left:187px;top:136px;width:164px;height:18px;padding-top:2px">All Currencies</div>
 <div class="cb" style="left:12px;top:212px"></div><div class="lbl" style="left:33px;top:214px">C<u>o</u>nfidential</div>
 <div class="lbl" style="left:188px;top:214px">Level</div><div class="ul" style="left:186px;top:228px;width:86px"></div>
 <div class="fld" style="left:272px;top:211px;width:79px;height:17px;padding-top:2px">4</div>
 <div class="lbl" style="left:11px;top:240px">Balance</div><div class="ul" style="left:9px;top:254px;width:178px"></div>
 <svg class="abs" style="left:169px;top:241px" width="14" height="12" viewBox="0 0 14 12"><path d="M1 3.5H7V1L13 6L7 11V8.5H1Z" fill="#f7d84a" stroke="#c9a21c" stroke-width="1"/></svg>
 <div class="fld" style="left:187px;top:238px;width:84px;height:17px">-887,852.58</div>
 <div class="dd" style="left:272px;top:238px;width:79px;height:17px">GBP</div>
 <div class="lbl" style="left:11px;top:268px"><u>G/L Account Properties</u></div>
 <div class="lbl" style="left:11px;top:286px">Account Type</div><div class="ul" style="left:9px;top:302px;width:178px"></div>
 <div class="dd" style="left:187px;top:285px;width:164px;height:18px;padding-top:2px">Sales</div>
 <div id="tree">
  <div class="tr l0" style="top:0">Turnover</div>
  <div class="tr l1" style="top:20px">350002 - Gross Sales Revenue</div>
  <div class="tr l2" style="top:40px">350003 - Domestic Sales</div>
  <div class="tr l3" style="top:60px;background:#fbd87a">400000 - Sales Revenue (Domestic) - Product No.1</div>
  <div class="tr l3" style="top:80px">400010 - Sales Revenue (Domestic) - Product No.2</div>
  <div class="tr l3" style="top:100px">400020 - Sales Revenue (Domestic) - Product No.3</div>
  <div class="tr l3" style="top:120px">400030 - Sales Revenue (Domestic) - Product No.4</div>
  <div class="tr l3" style="top:140px">400040 - Sales Revenue (Domestic) - Product No.5</div>
  <div class="tr l2" style="top:160px">400041 - Foreign Sales</div>
  <div class="tr l3" style="top:180px;color:#2c6a3c">410000 - Sales Revenue (Foreign) - Product No.1</div>
  <div class="tr l3" style="top:200px">410010 - Sales Revenue (Foreign) - Product No.2</div>
  <div class="tr l3" style="top:220px">410020 - Sales Revenue (Foreign) - Product No.3</div>
  <div class="tr l3" style="top:240px">410030 - Sales Revenue (Foreign) - Product No.4</div>
  <div class="tr l2" style="top:260px">410031 - Miscellaneous Revenue</div>
  <div class="tr l3" style="top:280px">420000 - Miscellaneous Revenue</div>
  <div class="tr l1" style="top:300px">420001 - Sales Discounts</div>
  <div class="tr l3" style="top:320px;padding-left:38px">450000 - Customer Discounts Allowed</div>
  <div class="tr l3" style="top:340px;padding-left:38px;color:#2c6a3c">450005 - Customer Discounts for Early Payment</div>
 </div>
 <div id="tsb"><div class="abs" style="left:4px;top:7px;border-left:5px solid transparent;border-right:5px solid transparent;border-bottom:5px solid #9aa0a8"></div></div>
 <div class="drw" style="top:30px;height:110px"><div class="h"></div><span style="top:53px">Assets</span></div>
 <div class="drw" style="top:140px;height:110px"><div class="h"></div><span style="top:53px">Liabilities</span></div>
 <div class="drw" style="top:250px;height:110px"><div class="h"></div><span style="top:53px">Capital and Reserves</span></div>
 <div class="abs" style="left:926px;top:360px;width:94px;height:13px;background:linear-gradient(#2e3d5e 0,#2e3d5e 3px,#8891bf 4px,#8a95c4 100%);border-left:2px solid #a7b3d6;border-right:2px solid #a7b3d6"></div>
 <div class="drw sel" style="top:373px;height:97px"><div class="h"></div><span style="top:40px">Turnover</span></div>
 <div class="drw" style="top:470px;height:110px"><div class="h"></div><span style="top:54px">Cost of Sales</span></div>
 <div class="drw" style="top:580px;height:110px"><div class="h"></div><span style="top:54px">Operating Costs</span></div>
 <div class="drw" style="top:690px;height:110px"><div class="h"></div><span style="top:41px">Non-Operating<br>Income and<br>Expenditure</span></div>
 <div class="drw" style="top:800px;height:110px"><div class="h"></div><span style="top:47px">Taxation and<br>Extraordinary Items</span></div>
</div>


<!--DLG--><div id="dlg">
 <div id="dlgt"><b>Account Balance - 400000, Sales Revenue (Domestic) - Product No.1</b>
  <div class="db" style="left:933px"><div class="abs" style="left:2px;top:8px;width:8px;height:2px;background:#cfd8f3"></div></div>
  <div class="db" style="left:949px"><div class="abs" style="left:1px;top:1px;width:9px;height:9px;border:1px solid #c3cef0;border-top-width:3px"></div></div>
  <div class="db" style="left:965px"><svg class="abs" style="left:1px;top:1px" width="9" height="9"><path d="M1 1L8 8M8 1L1 8" stroke="#b5c2ee" stroke-width="2.2"/></svg></div>
 </div>
 <div class="lbl" style="left:12px;top:37px">G/L Account</div>
 <div class="fld" style="left:109px;top:35px;width:127px;height:17px">400000</div>
 <div class="lbl" style="left:246px;top:37px">Sales Revenue (Domestic) - Product No.1</div><div class="ul" style="left:243px;top:52px;width:288px;background:#d9e1ec"></div>
 <div class="cb" style="left:699px;top:36px"></div><div class="lbl" style="left:720px;top:37px">Pos<u>t</u>ing Date from</div>
 <div class="fld" style="left:863px;top:35px;width:68px;height:17px;background:#fff">01.01.08</div>
 <div class="cb" style="left:699px;top:61px"></div><div class="lbl" style="left:720px;top:62px">Di<u>s</u>play</div>
 <div class="fld" style="left:797px;top:60px;width:32px;height:18px;background:#fdf09e;padding:2px 0 0 3px"><span style="background:#1d2f6f;color:#fff">100</span></div>
 <div class="lbl" style="left:837px;top:63px">Last Transactions</div>
 <div class="cb" style="left:699px;top:86px"></div><div class="lbl" style="left:720px;top:87px">Dis<u>p</u>lay Unreconciled Trans. Only</div>
 <div id="grid">
 <div class="gh" style="left:0px;width:25px;border-left:1px solid #c3cad6;padding-left:3px;">#</div><div class="gh" style="left:25px;width:125px;">Posting Date</div><div class="gh" style="left:150px;width:85px;">Trans. No.</div><div class="gh" style="left:235px;width:55px;">Origin</div><div class="gh" style="left:290px;width:83px;">Origin No.</div><div class="gh" style="left:373px;width:112px;">Offset Account</div><div class="gh" style="left:485px;width:209px;">Details</div><div class="gh" style="left:694px;width:156px;">C/D (LC)</div><div class="gh" style="left:850px;width:84px;">Cumulative ...</div>
 <div class="abs" style="left:140px;top:11px;border-left:4px solid transparent;border-right:4px solid transparent;border-top:5px solid #111"></div>
 <div class="abs" style="left:0;top:24px;width:934px;height:1px;background:#c9d3e0"></div>
 <div class="gr" style="top:25px"><span class="n">1</span><span style="left:238px;color:#8a9099">OB</span></div>
<div class="gr" style="top:45px"><span class="n">2</span><span style="left:28px">07.12.10</span><svg class="ar" style="left:151px" width="15" height="12" viewBox="0 0 15 12"><path d="M1 3.5H7.5V1L14 6L7.5 11V8.5H1Z" fill="#f8dc4e" stroke="#c7a020" stroke-width="1"/><path d="M2 4.5H8.3V3.2" fill="none" stroke="#fdf0a6" stroke-width="1"/></svg><span style="right:704px">436</span><span style="left:237px">IN</span><svg class="ar" style="left:291px" width="15" height="12" viewBox="0 0 15 12"><path d="M1 3.5H7.5V1L14 6L7.5 11V8.5H1Z" fill="#f8dc4e" stroke="#c7a020" stroke-width="1"/><path d="M2 4.5H8.3V3.2" fill="none" stroke="#fdf0a6" stroke-width="1"/></svg><span style="right:567px">97</span><span style="left:375px">AAST01</span><span style="left:487px">AR Invoice - AAST01</span><span style="right:90px;color:#2a7a3a">GBP (1,487.26)</span></div>
<div class="gr" style="top:65px"><span class="n">3</span><span style="left:28px">07.12.10</span><svg class="ar" style="left:151px" width="15" height="12" viewBox="0 0 15 12"><path d="M1 3.5H7.5V1L14 6L7.5 11V8.5H1Z" fill="#f8dc4e" stroke="#c7a020" stroke-width="1"/><path d="M2 4.5H8.3V3.2" fill="none" stroke="#fdf0a6" stroke-width="1"/></svg><span style="right:704px">436</span><span style="left:237px">IN</span><svg class="ar" style="left:291px" width="15" height="12" viewBox="0 0 15 12"><path d="M1 3.5H7.5V1L14 6L7.5 11V8.5H1Z" fill="#f8dc4e" stroke="#c7a020" stroke-width="1"/><path d="M2 4.5H8.3V3.2" fill="none" stroke="#fdf0a6" stroke-width="1"/></svg><span style="right:567px">97</span><span style="left:375px">AAST01</span><span style="left:487px">AR Invoice - AAST01</span><span style="right:90px;color:#2a7a3a">GBP (15.00)</span></div>
<div class="gr" style="top:85px"><span class="n">4</span><span style="left:28px">19.08.10</span><svg class="ar" style="left:151px" width="15" height="12" viewBox="0 0 15 12"><path d="M1 3.5H7.5V1L14 6L7.5 11V8.5H1Z" fill="#f8dc4e" stroke="#c7a020" stroke-width="1"/><path d="M2 4.5H8.3V3.2" fill="none" stroke="#fdf0a6" stroke-width="1"/></svg><span style="right:704px">427</span><span style="left:237px">IN</span><svg class="ar" style="left:291px" width="15" height="12" viewBox="0 0 15 12"><path d="M1 3.5H7.5V1L14 6L7.5 11V8.5H1Z" fill="#f8dc4e" stroke="#c7a020" stroke-width="1"/><path d="M2 4.5H8.3V3.2" fill="none" stroke="#fdf0a6" stroke-width="1"/></svg><span style="right:567px">96</span><span style="left:375px">C23900</span><span style="left:487px">AR Invoice - C23900</span><span style="right:90px;color:#2a7a3a">GBP (208.00)</span></div>
<div class="gr" style="top:105px"><span class="n">5</span><span style="left:28px">19.08.10</span><svg class="ar" style="left:151px" width="15" height="12" viewBox="0 0 15 12"><path d="M1 3.5H7.5V1L14 6L7.5 11V8.5H1Z" fill="#f8dc4e" stroke="#c7a020" stroke-width="1"/><path d="M2 4.5H8.3V3.2" fill="none" stroke="#fdf0a6" stroke-width="1"/></svg><span style="right:704px">427</span><span style="left:237px">IN</span><svg class="ar" style="left:291px" width="15" height="12" viewBox="0 0 15 12"><path d="M1 3.5H7.5V1L14 6L7.5 11V8.5H1Z" fill="#f8dc4e" stroke="#c7a020" stroke-width="1"/><path d="M2 4.5H8.3V3.2" fill="none" stroke="#fdf0a6" stroke-width="1"/></svg><span style="right:567px">96</span><span style="left:375px">C23900</span><span style="left:487px">AR Invoice - C23900</span><span style="right:90px;color:#2a7a3a">GBP (15.00)</span></div>
<div class="gr" style="top:125px"><span class="n">6</span><span style="left:28px">11.08.10</span><svg class="ar" style="left:151px" width="15" height="12" viewBox="0 0 15 12"><path d="M1 3.5H7.5V1L14 6L7.5 11V8.5H1Z" fill="#f8dc4e" stroke="#c7a020" stroke-width="1"/><path d="M2 4.5H8.3V3.2" fill="none" stroke="#fdf0a6" stroke-width="1"/></svg><span style="right:704px">426</span><span style="left:237px">IN</span><svg class="ar" style="left:291px" width="15" height="12" viewBox="0 0 15 12"><path d="M1 3.5H7.5V1L14 6L7.5 11V8.5H1Z" fill="#f8dc4e" stroke="#c7a020" stroke-width="1"/><path d="M2 4.5H8.3V3.2" fill="none" stroke="#fdf0a6" stroke-width="1"/></svg><span style="right:567px">95</span><span style="left:375px">C20000</span><span style="left:487px">AR Invoice - C20000</span><span style="right:90px;color:#2a7a3a">GBP (138.06)</span></div>
<div class="gr" style="top:145px"><span class="n">7</span><span style="left:28px">11.08.10</span><svg class="ar" style="left:151px" width="15" height="12" viewBox="0 0 15 12"><path d="M1 3.5H7.5V1L14 6L7.5 11V8.5H1Z" fill="#f8dc4e" stroke="#c7a020" stroke-width="1"/><path d="M2 4.5H8.3V3.2" fill="none" stroke="#fdf0a6" stroke-width="1"/></svg><span style="right:704px">426</span><span style="left:237px">IN</span><svg class="ar" style="left:291px" width="15" height="12" viewBox="0 0 15 12"><path d="M1 3.5H7.5V1L14 6L7.5 11V8.5H1Z" fill="#f8dc4e" stroke="#c7a020" stroke-width="1"/><path d="M2 4.5H8.3V3.2" fill="none" stroke="#fdf0a6" stroke-width="1"/></svg><span style="right:567px">95</span><span style="left:375px">C20000</span><span style="left:487px">AR Invoice - C20000</span><span style="right:90px;color:#2a7a3a">GBP (15.00)</span></div>
<div class="gr" style="top:165px"><span class="n">8</span><span style="left:28px">09.07.10</span><svg class="ar" style="left:151px" width="15" height="12" viewBox="0 0 15 12"><path d="M1 3.5H7.5V1L14 6L7.5 11V8.5H1Z" fill="#f8dc4e" stroke="#c7a020" stroke-width="1"/><path d="M2 4.5H8.3V3.2" fill="none" stroke="#fdf0a6" stroke-width="1"/></svg><span style="right:704px">423</span><span style="left:237px">IN</span><svg class="ar" style="left:291px" width="15" height="12" viewBox="0 0 15 12"><path d="M1 3.5H7.5V1L14 6L7.5 11V8.5H1Z" fill="#f8dc4e" stroke="#c7a020" stroke-width="1"/><path d="M2 4.5H8.3V3.2" fill="none" stroke="#fdf0a6" stroke-width="1"/></svg><span style="right:567px">94</span><span style="left:375px">AAST01</span><span style="left:487px">AR Invoice - AAST01</span><span style="right:90px;color:#2a7a3a">GBP (14.00)</span></div>
<div class="gr" style="top:185px"><span class="n">9</span><span style="left:28px">09.07.10</span><svg class="ar" style="left:151px" width="15" height="12" viewBox="0 0 15 12"><path d="M1 3.5H7.5V1L14 6L7.5 11V8.5H1Z" fill="#f8dc4e" stroke="#c7a020" stroke-width="1"/><path d="M2 4.5H8.3V3.2" fill="none" stroke="#fdf0a6" stroke-width="1"/></svg><span style="right:704px">423</span><span style="left:237px">IN</span><svg class="ar" style="left:291px" width="15" height="12" viewBox="0 0 15 12"><path d="M1 3.5H7.5V1L14 6L7.5 11V8.5H1Z" fill="#f8dc4e" stroke="#c7a020" stroke-width="1"/><path d="M2 4.5H8.3V3.2" fill="none" stroke="#fdf0a6" stroke-width="1"/></svg><span style="right:567px">94</span><span style="left:375px">AAST01</span><span style="left:487px">AR Invoice - AAST01</span><span style="right:90px;color:#2a7a3a">GBP (15.00)</span></div>
<div class="gr" style="top:205px"><span class="n">10</span><span style="left:28px">01.01.10</span><svg class="ar" style="left:151px" width="15" height="12" viewBox="0 0 15 12"><path d="M1 3.5H7.5V1L14 6L7.5 11V8.5H1Z" fill="#f8dc4e" stroke="#c7a020" stroke-width="1"/><path d="M2 4.5H8.3V3.2" fill="none" stroke="#fdf0a6" stroke-width="1"/></svg><span style="right:704px">407</span><span style="left:237px">IN</span><svg class="ar" style="left:291px" width="15" height="12" viewBox="0 0 15 12"><path d="M1 3.5H7.5V1L14 6L7.5 11V8.5H1Z" fill="#f8dc4e" stroke="#c7a020" stroke-width="1"/><path d="M2 4.5H8.3V3.2" fill="none" stroke="#fdf0a6" stroke-width="1"/></svg><span style="right:567px">88</span><span style="left:375px">C20000</span><span style="left:487px">AR Invoice - C20000</span><span style="right:90px;color:#2a7a3a">GBP (89.60)</span></div>
<div class="gr" style="top:225px"><span class="n">11</span><span style="left:28px">01.01.10</span><svg class="ar" style="left:151px" width="15" height="12" viewBox="0 0 15 12"><path d="M1 3.5H7.5V1L14 6L7.5 11V8.5H1Z" fill="#f8dc4e" stroke="#c7a020" stroke-width="1"/><path d="M2 4.5H8.3V3.2" fill="none" stroke="#fdf0a6" stroke-width="1"/></svg><span style="right:704px">407</span><span style="left:237px">IN</span><svg class="ar" style="left:291px" width="15" height="12" viewBox="0 0 15 12"><path d="M1 3.5H7.5V1L14 6L7.5 11V8.5H1Z" fill="#f8dc4e" stroke="#c7a020" stroke-width="1"/><path d="M2 4.5H8.3V3.2" fill="none" stroke="#fdf0a6" stroke-width="1"/></svg><span style="right:567px">88</span><span style="left:375px">C20000</span><span style="left:487px">AR Invoice - C20000</span><span style="right:90px;color:#2a7a3a">GBP (10.00)</span></div>
<div class="gr" style="top:245px"><span class="n">12</span><span style="left:28px">30.12.09</span><svg class="ar" style="left:151px" width="15" height="12" viewBox="0 0 15 12"><path d="M1 3.5H7.5V1L14 6L7.5 11V8.5H1Z" fill="#f8dc4e" stroke="#c7a020" stroke-width="1"/><path d="M2 4.5H8.3V3.2" fill="none" stroke="#fdf0a6" stroke-width="1"/></svg><span style="right:704px">408</span><span style="left:237px">IN</span><svg class="ar" style="left:291px" width="15" height="12" viewBox="0 0 15 12"><path d="M1 3.5H7.5V1L14 6L7.5 11V8.5H1Z" fill="#f8dc4e" stroke="#c7a020" stroke-width="1"/><path d="M2 4.5H8.3V3.2" fill="none" stroke="#fdf0a6" stroke-width="1"/></svg><span style="right:567px">89</span><span style="left:375px">C20000</span><span style="left:487px">AR Invoice - C20000</span><span style="right:90px;color:#2a7a3a">GBP (89.60)</span></div>
<div class="gr" style="top:265px"><span class="n">13</span><span style="left:28px">19.11.09</span><svg class="ar" style="left:151px" width="15" height="12" viewBox="0 0 15 12"><path d="M1 3.5H7.5V1L14 6L7.5 11V8.5H1Z" fill="#f8dc4e" stroke="#c7a020" stroke-width="1"/><path d="M2 4.5H8.3V3.2" fill="none" stroke="#fdf0a6" stroke-width="1"/></svg><span style="right:704px">405</span><span style="left:237px">IN</span><svg class="ar" style="left:291px" width="15" height="12" viewBox="0 0 15 12"><path d="M1 3.5H7.5V1L14 6L7.5 11V8.5H1Z" fill="#f8dc4e" stroke="#c7a020" stroke-width="1"/><path d="M2 4.5H8.3V3.2" fill="none" stroke="#fdf0a6" stroke-width="1"/></svg><span style="right:567px">87</span><span style="left:375px">AAST02</span><span style="left:487px">AR Invoice - AAST02</span><span style="right:90px;color:#2a7a3a">GBP (205.00)</span></div>
<div class="vl" style="left:24px"></div><div class="vl" style="left:149px"></div><div class="vl" style="left:234px"></div><div class="vl" style="left:289px"></div><div class="vl" style="left:372px"></div><div class="vl" style="left:484px"></div><div class="vl" style="left:693px"></div><div class="vl" style="left:849px"></div><div class="vl" style="left:933px"></div>
 </div>
 <!-- v scrollbar -->
 <div class="abs" style="left:946px;top:133px;width:20px;height:260px;background:#f1f5fb;border:1px solid #d3dceb">
  <div class="abs" style="left:4px;top:6px;border-left:5px solid transparent;border-right:5px solid transparent;border-bottom:5px solid #333"></div>
  <div class="abs" style="left:0px;top:18px;width:17px;height:14px;background:#f4f7fc;border:1px solid #aab6cc;border-radius:1px"></div>
  <div class="abs" style="left:4px;top:247px;border-left:5px solid transparent;border-right:5px solid transparent;border-top:5px solid #333"></div>
 </div>
 <!-- h scrollbar -->
 <div class="abs" style="left:35px;top:418px;width:910px;height:21px;background:#f1f5fb;border:1px solid #c3cfe2">
  <div class="abs" style="left:6px;top:5px;border-top:5px solid transparent;border-bottom:5px solid transparent;border-right:5px solid #333"></div>
  <div class="abs" style="left:19px;top:1px;width:601px;height:17px;background:linear-gradient(#dce6f3,#d3dfef);border:1px solid #a9b8d0;border-radius:1px"><div class="abs" style="left:295px;top:5px;width:9px;height:5px;background:repeating-linear-gradient(90deg,#9aa6bd 0,#9aa6bd 1px,transparent 1px,transparent 3px)"></div></div>
  <div class="abs" style="left:896px;top:5px;border-top:5px solid transparent;border-bottom:5px solid transparent;border-left:5px solid #333"></div>
 </div>
 <!-- back button -->
 <svg class="abs" style="left:11px;top:489px" width="38" height="36" viewBox="0 0 38 36"><defs><radialGradient id="bg1" cx="35%" cy="30%" r="75%"><stop offset="0" stop-color="#a4c1e8"/><stop offset="0.6" stop-color="#7da3d8"/><stop offset="1" stop-color="#6690cc"/></radialGradient></defs><circle cx="16.6" cy="17.3" r="15" fill="url(#bg1)"/><path d="M10.3 17.3L20.6 9.3V13.3H34V21.3H20.6V25.3Z" fill="#f6f9fd" stroke="#dbe6f5" stroke-width="0.6"/></svg>
 <div class="btn" style="left:64px;top:496px;width:80px;height:24px;border:2px solid #55544c;border-radius:3px;padding-top:3px;background:linear-gradient(90deg,#8fa9d8 0,#8fa9d8 6px,transparent 7px),linear-gradient(#fdf3a8,#f9e67e 50%,#f6df6a)">OK</div>
 <div class="btn" style="left:763px;top:496px;width:205px;height:24px;padding-top:4px">I<u>n</u>ternal Reconciliation</div>
</div><!--/DLG-->


<div id="status">
 <div class="sf" style="left:8px;width:635px"></div><div class="abs" style="left:644px;top:3px;width:101px;height:27px;background:linear-gradient(rgba(255,255,255,0),#fff 35%);"></div>
 <div class="lbl" style="left:670px;top:9px">07.12.10</div>
 <div class="sf" style="left:746px;width:251px"></div>
 <div class="sf" style="left:1001px;width:244px"></div>
 <div class="abs" style="left:1270px;top:13px;font-size:24px;font-weight:bold;color:#8e9298;letter-spacing:-0.3px;line-height:24px;-webkit-text-stroke:0.8px #8e9298">SAP</div>
 <div class="abs" style="left:1321px;top:15px;font-size:10.5px;color:#9a9ea4;letter-spacing:0;line-height:10px">Business</div>
 <div class="abs" style="left:1321px;top:22px;font-size:17px;font-weight:bold;color:#f0a31a;line-height:17px">One</div>
</div>

</body>
</html>
